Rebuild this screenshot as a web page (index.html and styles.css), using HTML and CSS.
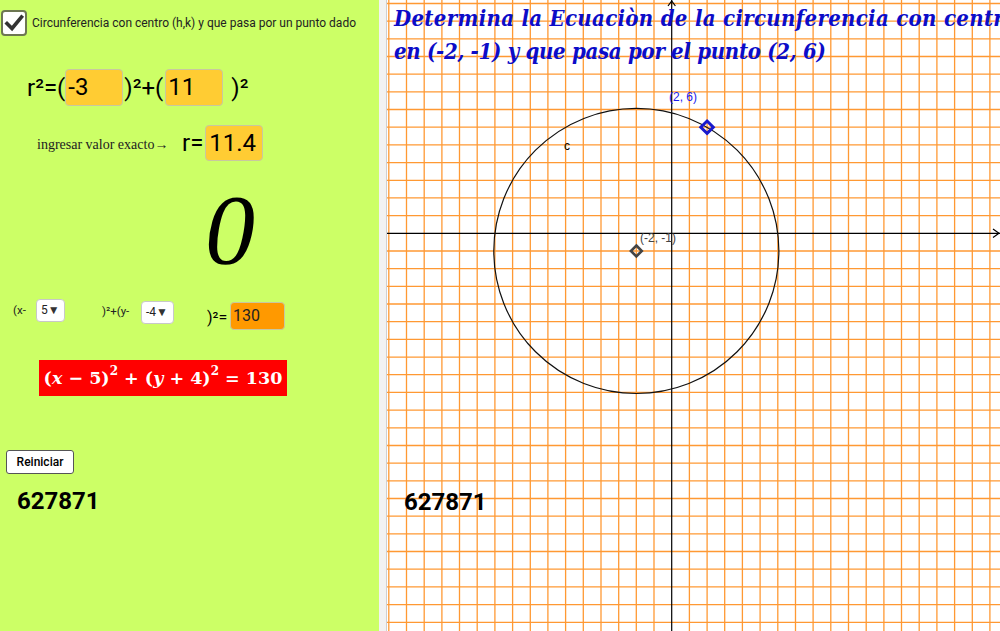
FILE: index.html
```html
<!DOCTYPE html>
<html lang="es">
<head>
<meta charset="utf-8">
<title>Circunferencia</title>
<link rel="stylesheet" href="styles.css">
</head>
<body>
<div class="app">
  <div class="left">
    <div class="chk-row">
      <span class="chk"><svg width="22" height="22" viewBox="0 0 22 22"><path d="M4 11.5 L9 16.5 L18.5 5" fill="none" stroke="#333" stroke-width="3.6" stroke-linecap="square" stroke-linejoin="miter"/></svg></span>
      <span class="chk-label">Circunferencia con centro (h,k) y que pasa por un punto dado</span>
    </div>
    <div class="r2-row">
      <span class="big">r²=(</span><span class="inp">-3</span><span class="big paren2">)²+(</span><span class="inp">11</span><span class="big gap8">)²</span>
    </div>
    <div class="exact-row">
      <span class="hint">ingresar valor exacto→</span><span class="big req">r=</span><span class="inp">11.4</span>
    </div>
    <div class="zero">0</div>
    <div class="eq-row">
      <span class="small t1">(x-</span>
      <span class="sel s1">5<span class="tri">▼</span></span>
      <span class="small t2">)²+(y-</span>
      <span class="sel s2">-4<span class="tri">▼</span></span>
      <span class="mid t3">)²=</span>
      <span class="inp orange">130</span>
    </div>
    <div class="red">(<i>x</i> − 5)<sup>2</sup> + (<i>y</i> + 4)<sup>2</sup> = 130</div>
    <button class="reset">Reiniciar</button>
    <div class="num">627871</div>
  </div>
  <div class="sep"></div>
  <div class="graph">
    <svg class="canvas" width="613" height="631" viewBox="387 0 613 631">
      <g stroke="#ff9933" stroke-width="1.3">
        <line x1="388.8" y1="0" x2="388.8" y2="631"/>
        <line x1="406.5" y1="0" x2="406.5" y2="631"/>
        <line x1="424.2" y1="0" x2="424.2" y2="631"/>
        <line x1="441.9" y1="0" x2="441.9" y2="631"/>
        <line x1="459.5" y1="0" x2="459.5" y2="631"/>
        <line x1="477.2" y1="0" x2="477.2" y2="631"/>
        <line x1="494.9" y1="0" x2="494.9" y2="631"/>
        <line x1="512.6" y1="0" x2="512.6" y2="631"/>
        <line x1="530.3" y1="0" x2="530.3" y2="631"/>
        <line x1="547.9" y1="0" x2="547.9" y2="631"/>
        <line x1="565.6" y1="0" x2="565.6" y2="631"/>
        <line x1="583.3" y1="0" x2="583.3" y2="631"/>
        <line x1="601.0" y1="0" x2="601.0" y2="631"/>
        <line x1="618.7" y1="0" x2="618.7" y2="631"/>
        <line x1="636.3" y1="0" x2="636.3" y2="631"/>
        <line x1="654.0" y1="0" x2="654.0" y2="631"/>
        <line x1="689.4" y1="0" x2="689.4" y2="631"/>
        <line x1="707.1" y1="0" x2="707.1" y2="631"/>
        <line x1="724.7" y1="0" x2="724.7" y2="631"/>
        <line x1="742.4" y1="0" x2="742.4" y2="631"/>
        <line x1="760.1" y1="0" x2="760.1" y2="631"/>
        <line x1="777.8" y1="0" x2="777.8" y2="631"/>
        <line x1="795.5" y1="0" x2="795.5" y2="631"/>
        <line x1="813.1" y1="0" x2="813.1" y2="631"/>
        <line x1="830.8" y1="0" x2="830.8" y2="631"/>
        <line x1="848.5" y1="0" x2="848.5" y2="631"/>
        <line x1="866.2" y1="0" x2="866.2" y2="631"/>
        <line x1="883.9" y1="0" x2="883.9" y2="631"/>
        <line x1="901.5" y1="0" x2="901.5" y2="631"/>
        <line x1="919.2" y1="0" x2="919.2" y2="631"/>
        <line x1="936.9" y1="0" x2="936.9" y2="631"/>
        <line x1="954.6" y1="0" x2="954.6" y2="631"/>
        <line x1="972.3" y1="0" x2="972.3" y2="631"/>
        <line x1="989.9" y1="0" x2="989.9" y2="631"/>
        <line x1="387" y1="3.5" x2="1000" y2="3.5"/>
        <line x1="387" y1="21.1" x2="1000" y2="21.1"/>
        <line x1="387" y1="38.8" x2="1000" y2="38.8"/>
        <line x1="387" y1="56.5" x2="1000" y2="56.5"/>
        <line x1="387" y1="74.2" x2="1000" y2="74.2"/>
        <line x1="387" y1="91.9" x2="1000" y2="91.9"/>
        <line x1="387" y1="109.5" x2="1000" y2="109.5"/>
        <line x1="387" y1="127.2" x2="1000" y2="127.2"/>
        <line x1="387" y1="144.9" x2="1000" y2="144.9"/>
        <line x1="387" y1="162.6" x2="1000" y2="162.6"/>
        <line x1="387" y1="180.3" x2="1000" y2="180.3"/>
        <line x1="387" y1="197.9" x2="1000" y2="197.9"/>
        <line x1="387" y1="215.6" x2="1000" y2="215.6"/>
        <line x1="387" y1="251.0" x2="1000" y2="251.0"/>
        <line x1="387" y1="268.7" x2="1000" y2="268.7"/>
        <line x1="387" y1="286.3" x2="1000" y2="286.3"/>
        <line x1="387" y1="304.0" x2="1000" y2="304.0"/>
        <line x1="387" y1="321.7" x2="1000" y2="321.7"/>
        <line x1="387" y1="339.4" x2="1000" y2="339.4"/>
        <line x1="387" y1="357.1" x2="1000" y2="357.1"/>
        <line x1="387" y1="374.7" x2="1000" y2="374.7"/>
        <line x1="387" y1="392.4" x2="1000" y2="392.4"/>
        <line x1="387" y1="410.1" x2="1000" y2="410.1"/>
        <line x1="387" y1="427.8" x2="1000" y2="427.8"/>
        <line x1="387" y1="445.5" x2="1000" y2="445.5"/>
        <line x1="387" y1="463.1" x2="1000" y2="463.1"/>
        <line x1="387" y1="480.8" x2="1000" y2="480.8"/>
        <line x1="387" y1="498.5" x2="1000" y2="498.5"/>
        <line x1="387" y1="516.2" x2="1000" y2="516.2"/>
        <line x1="387" y1="533.9" x2="1000" y2="533.9"/>
        <line x1="387" y1="551.5" x2="1000" y2="551.5"/>
        <line x1="387" y1="569.2" x2="1000" y2="569.2"/>
        <line x1="387" y1="586.9" x2="1000" y2="586.9"/>
        <line x1="387" y1="604.6" x2="1000" y2="604.6"/>
        <line x1="387" y1="622.3" x2="1000" y2="622.3"/>
      </g>
      <g stroke="#000" stroke-width="1.2" fill="none">
        <line x1="671.7" y1="0" x2="671.7" y2="631"/>
        <line x1="387" y1="233.3" x2="1000" y2="233.3"/>
        <polyline points="668,6 671.7,1 675.4,6"/>
        <polyline points="993,229.1 999,233.3 993,237.5"/>
      </g>
      <circle cx="636.34" cy="250.98" r="142.54" fill="none" stroke="#111" stroke-width="1.2"/>
      <text x="564" y="150" class="lbl">c</text>
      <text x="669" y="101" class="lbl blue">(2, 6)</text>
      <text x="640" y="242" class="lbl gray">(-2, -1)</text>
      <polygon points="636.34,245.5 641.8,250.98 636.34,256.4 630.9,250.98" fill="none" stroke="#444" stroke-width="2.6"/>
      <polygon points="707.06,121 713.3,127.22 707.06,133.4 700.8,127.22" fill="none" stroke="#1a1acc" stroke-width="3"/>
    </svg>
    <div class="title">
      <div class="title-l1">Determina la Ecuaciòn de la circunferencia con centro</div>
      <div class="title-l2">en (-2, -1) y que pasa por el punto (2, 6)</div>
    </div>
    <div class="num gnum">627871</div>
  </div>
</div>
</body>
</html>
```

FILE: styles.css
```css
html, body {
  margin: 0;
  padding: 0;
  width: 1000px;
  height: 631px;
  overflow: hidden;
  background: #fff;
}

.app {
  display: flex;
  width: 1000px;
  height: 631px;
}

.left {
  width: 379px;
  height: 631px;
  background: #ccff66;
  font-family: Roboto, "Liberation Sans", sans-serif;
  color: #000;
  display: flex;
  flex-direction: column;
  align-items: flex-start;
}

.chk-row {
  display: flex;
  align-items: center;
  gap: 5px;
  margin: 10px 0 0 1px;
}

.chk {
  width: 22px;
  height: 22px;
  border: 2px solid #6d7752;
  border-radius: 4px;
  background: #fff;
  display: flex;
}

.chk-label {
  font-size: 12px;
  color: #222;
}

.r2-row {
  display: flex;
  align-items: center;
  margin: 33px 0 0 27px;
  height: 37px;
}

.big {
  font-size: 24px;
  line-height: 30px;
}

.paren2 {
  margin: 0 2px 0 1px;
}

.gap8 {
  margin-left: 8px;
}

.inp {
  box-sizing: border-box;
  width: 58px;
  height: 37px;
  background: #ffcc33;
  border: 1px solid #c8c8a0;
  border-radius: 4px;
  font-size: 24px;
  line-height: 35px;
  padding-left: 2px;
  text-align: left;
}

.exact-row {
  display: flex;
  align-items: center;
  margin: 19px 0 0 37px;
  height: 36px;
}

.exact-row .inp {
  height: 36px;
  margin-left: 2px;
  padding-left: 3px;
}

.hint {
  font-family: "Liberation Serif", serif;
  font-size: 14px;
  color: #222;
  width: 145px;
  padding-top: 3px;
}

.zero {
  font-family: "Liberation Serif", serif;
  font-style: italic;
  font-size: 100px;
  line-height: 100px;
  margin: 19px 0 0 205px;
  height: 100px;
}

.eq-row {
  display: flex;
  align-items: flex-start;
  margin: 19px 0 0 13px;
  height: 36px;
}

.small {
  font-size: 11.5px;
  color: #222;
}

.t1 {
  margin-top: 4px;
  width: 23px;
}

.t2 {
  margin: 5px 0 0 37px;
  width: 39px;
}

.mid {
  font-size: 16px;
}

.t3 {
  margin: 9px 0 0 33px;
  width: 23px;
}

.sel {
  box-sizing: border-box;
  height: 23px;
  background: #fff;
  border: 1px solid #c8c8c8;
  border-radius: 4px;
  font-size: 12px;
  line-height: 21px;
  padding-left: 4px;
  color: #222;
}

.s1 {
  width: 29px;
}

.s2 {
  width: 33px;
  margin-top: 2px;
}

.tri {
  font-size: 12px;
  color: #333;
}

.inp.orange {
  background: #ff9900;
  width: 55px;
  height: 28px;
  font-size: 16px;
  line-height: 26px;
  margin-top: 3px;
  padding-left: 2px;
  color: #222;
}

.red {
  box-sizing: border-box;
  width: 248px;
  height: 36px;
  margin: 25px 0 0 39px;
  background: #ff0000;
  color: #fff;
  font-family: "DejaVu Serif", serif;
  font-weight: bold;
  font-size: 17.5px;
  line-height: 36px;
  text-align: center;
  white-space: nowrap;
}

.red sup {
  font-size: 12px;
  line-height: 0;
  vertical-align: 9px;
}

.reset {
  box-sizing: border-box;
  width: 68px;
  height: 24px;
  margin: 54px 0 0 6px;
  padding: 0;
  background: #fff;
  border: 1px solid #555;
  border-radius: 3px;
  font-family: Roboto, "Liberation Sans", sans-serif;
  font-weight: 500;
  font-size: 12px;
  color: #000;
}

.num {
  font-family: Roboto, "Liberation Sans", sans-serif;
  font-weight: bold;
  font-size: 24px;
  line-height: 28px;
  margin: 13px 0 0 17px;
  color: #000;
}

.sep {
  width: 7px;
  height: 631px;
  background: #f2f2f2;
  border-right: 1px solid #cfcfcf;
}

.graph {
  position: relative;
  width: 613px;
  height: 631px;
  overflow: hidden;
}

.canvas {
  display: block;
}

.lbl {
  font-family: "Liberation Sans", sans-serif;
  font-size: 12px;
  fill: #000;
}

.lbl.blue {
  fill: #1a1aee;
}

.lbl.gray {
  fill: #444;
}

.title {
  position: absolute;
  left: 7px;
  top: 2px;
  white-space: nowrap;
  font-family: "DejaVu Serif Condensed", "DejaVu Serif", serif;
  font-stretch: condensed;
  font-weight: bold;
  font-style: italic;
  font-size: 22px;
  line-height: 33px;
  color: #0c0cc8;
}

.title-l1 {
  letter-spacing: 0.3px;
}

.title-l2 {
  letter-spacing: -0.3px;
}

.gnum {
  position: absolute;
  left: 17px;
  top: 488px;
  margin: 0;
}
```
